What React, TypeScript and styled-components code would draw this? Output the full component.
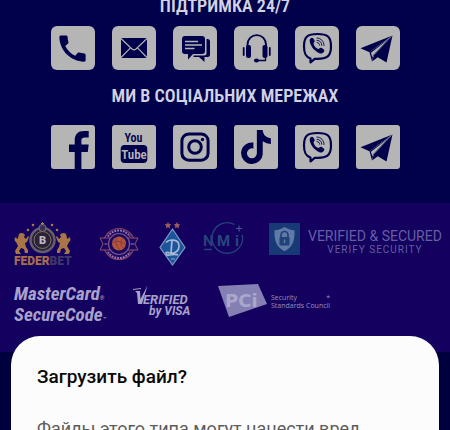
import React from "react";
import styled, { createGlobalStyle } from "styled-components";
import { MdCall } from "react-icons/md";
import { FaTiktok } from "react-icons/fa";

const navy = "#01014b";
const silver = "#b5b5b5";
const condensed = `"Roboto Condensed", "Liberation Sans Narrow", Roboto, sans-serif`;

const GlobalStyle = createGlobalStyle`
  body {
    margin: 0;
    overflow: hidden;
    background: #00003f;
    font-family: Roboto, sans-serif;
  }
`;

const Page = styled.div`
  position: relative;
  min-height: 100vh;
  overflow: hidden;
`;

const Contacts = styled.section`
  display: flex;
  flex-direction: column;
  align-items: center;
  margin-top: -4px;
  padding-bottom: 34px;
  background: ${navy};
`;

const Heading = styled.h2`
  margin: 0;
  font: 600 18px/20px ${condensed};
  color: #d2d2e2;
  text-align: center;
`;

const TileRow = styled.nav<{ $top: number; $bottom: number }>`
  display: flex;
  justify-content: center;
  gap: 17px;
  padding: ${(p) => p.$top}px 0 ${(p) => p.$bottom}px;
`;

const Tile = styled.a<{ $radius: number }>`
  display: grid;
  place-items: center;
  width: 44px;
  height: 44px;
  border-radius: ${(p) => p.$radius}px;
  background: ${silver};
  color: ${navy};
  overflow: hidden;
`;

const Partners = styled.footer`
  height: 149px;
  box-sizing: border-box;
  padding: 19px 12px 0 14px;
  background: #13005f;
`;

const LogoRow = styled.div<{ $columns: string }>`
  display: grid;
  grid-template-columns: ${(p) => p.$columns};
  align-items: start;

  & + & {
    margin-top: 18px;
  }
`;

const Logo = styled.svg`
  display: block;
  overflow: visible;
`;

const Secured = styled.div`
  display: flex;
  gap: 8px;
  padding-top: 1px;
`;

const SecuredText = styled.div`
  display: flex;
  flex-direction: column;
  align-items: center;
  padding-top: 4px;
  color: #655ea5;
  white-space: nowrap;
`;

const SecuredTitle = styled.span`
  font-size: 14px;
  line-height: 18px;
`;

const SecuredNote = styled.span`
  font-size: 10px;
  line-height: 10px;
  letter-spacing: 1px;
`;

const SecureCode = styled.div`
  font: italic 700 19px/17px ${condensed};
  color: #a9a2cb;
  padding-top: 1px;
`;

const Mark = styled.small`
  font-size: 6px;
`;

const Pci = styled.div`
  display: flex;
  gap: 4px;
`;

const PciText = styled.div`
  padding-top: 10px;
  font: 400 7px/8px "Open Sans", sans-serif;
  color: #9690bd;
  white-space: nowrap;
`;

const PciLine = styled.div`
  display: flex;
  justify-content: space-between;
`;

const Overlay = styled.div`
  position: absolute;
  inset: 0;
  padding: 336px 11px 0;
`;

const Dialog = styled.div`
  padding: 27px 26px 32px;
  border-radius: 29px;
  background: #fcfcfc;
`;

const DialogTitle = styled.h1`
  margin: 0 0 26px;
  font-size: 19px;
  line-height: 28px;
  font-weight: 500;
  color: #0a0a0a;
`;

const DialogText = styled.p`
  margin: 0;
  font-size: 18px;
  line-height: 24px;
  color: #5c5c5c;
`;

const Glyph = ({ children }: { children: React.ReactNode }) => (
  <svg width="44" height="44" viewBox="0 0 44 44" fill="currentColor" aria-hidden="true">
    {children}
  </svg>
);

const Envelope = () => (
  <Glyph>
    <rect x="9" y="12" width="26" height="20" rx="1" />
    <path d="M9 12.500 20 23q2 1.700 4 0L35 12.500M9 31.500 18.500 21.800M35 31.500 25.500 21.800" fill="none" stroke={silver} strokeWidth="1.100" />
  </Glyph>
);

const Chat = () => (
  <Glyph>
    <path d="M33.500 13h1a2.500 2.500 0 0 1 2.500 2.500v13a2.500 2.500 0 0 1-2.500 2.500H31.500v5L26 31H20.500V29.500H31a2.500 2.500 0 0 0 2.500-2.500z" />
    <path d="M12 10H29a3 3 0 0 1 3 3V25a3 3 0 0 1-3 3H20l-5 5.500V28H12a3 3 0 0 1-3-3V13a3 3 0 0 1 3-3z" />
    <path d="M12 15.500H25M12 19H29M12 22.500H21.500" stroke={silver} strokeWidth="1.300" />
  </Glyph>
);

const Headset = () => (
  <Glyph>
    <path d="M13.500 21V19C13.500 5.800 32 5.800 32 19V21" fill="none" stroke="currentColor" strokeWidth="1.800" />
    <rect x="12" y="19" width="5" height="13" rx="2" />
    <rect x="28.500" y="19" width="5" height="13" rx="2" />
    <rect x="8.800" y="21" width="1.800" height="9" rx=".9" />
    <rect x="34.900" y="21" width="1.800" height="9" rx=".9" />
    <path d="M31.500 31V34.500H22.500" fill="none" stroke="currentColor" strokeWidth="1.300" />
    <ellipse cx="22.500" cy="34.500" rx="2.500" ry="1.900" />
  </Glyph>
);

const Viber = () => (
  <Glyph>
    <path
      d="M22.500 8C12.500 8 9 10.500 9 20.500c0 7 1.500 10.500 6.500 12V36.500l4.200-3.700c12.300.7 16.300-2.200 16.300-12.300C36 10.500 32.500 8 22.500 8z"
      fill="none"
      stroke="currentColor"
      strokeWidth="2.200"
      strokeLinejoin="round"
    />
    <path d="M15.500 12.600c1.500-1.500 2.300-1.100 3.800 1.500 1.200 2-.6 2.400-.8 3.500.5 2.600 2.400 4.800 4.900 5.400 1.300-.2 1.500-2.100 3.700-.8 2.500 1.600 2.900 2.300 1.400 4-1.400 1.500-2.500 1.700-4.600.7-5-2.600-7.400-6-8.900-10.200-.5-1.700-.4-3.200.5-4.100z" />
    <path d="M22 12c4 .2 7 3.200 7 7.500M22 14.300c3 .2 4.800 2.100 4.800 5M22 16.500c1.700.2 2.600 1.100 2.700 2.700" fill="none" stroke="currentColor" strokeWidth=".9" strokeLinecap="round" />
  </Glyph>
);

const Plane = () => (
  <Glyph>
    <path d="M36.500 9.500 4.500 22.300 13.500 26.200z" />
    <path d="M13.500 26.200 16 35.500 17.500 29.500 34 12z" />
    <path d="M36.500 9.500 18 29.300 16 35.500 21.800 31.300 30.500 36.500z" />
    <path d="M15 26.800 33 12.800 17.300 29 16.300 31.500z" fill={silver} />
  </Glyph>
);

const Facebook = () => (
  <Glyph>
    <path d="M23.700 44V27H18V19.500h5.700V15.500C23.700 9.300 27 6 33 6h4.700v6.600H34.500c-3.200 0-4.100 1-4.100 3.700v3.200h7.300L36.800 27H30.400V44z" />
  </Glyph>
);

const YouTube = () => (
  <Glyph>
    <text x="21.500" y="17" textAnchor="middle" fontFamily={condensed} fontWeight="600" fontSize="12">You</text>
    <rect x="8.700" y="20" width="26.600" height="18" rx="4" />
    <text x="22" y="34" textAnchor="middle" fontFamily={condensed} fontWeight="600" fontSize="13" fill={silver}>Tube</text>
  </Glyph>
);

const Instagram = () => (
  <Glyph>
    <g fill="none" stroke="currentColor" strokeWidth="3">
      <rect x="8.900" y="9" width="26.200" height="26.200" rx="7" />
      <circle cx="22" cy="22" r="6.300" />
    </g>
    <circle cx="29.500" cy="14.500" r="1.700" />
  </Glyph>
);

const Lion = () => (
  <path d="M5 12c2-2 5-1 6 1l-1 2 2 2 2-3 1 1-2 5-2 1 1 4 2 3v3h-3l-1-4-3-1-2 3 2 3H2l-1-3 3-5-2-4C0 19 0 16 2 15l1 2 1-1z" fill="#a87546" />
);

const FederBet = () => (
  <Logo width="57" height="44" viewBox="0 0 57 44" role="img" aria-label="Federbet">
    <Lion />
    <g transform="translate(57 0) scale(-1 1)"><Lion /></g>
    <circle cx="28.500" cy="18" r="12" fill="#222142" stroke="#675d6c" strokeWidth="2.500" />
    <circle cx="28.500" cy="18" r="8.500" fill="#292239" stroke="#8f7254" strokeWidth="1" />
    <circle cx="28.500" cy="6" r="3.500" fill="#373158" stroke="#847263" />
    <path d="M28.500 0v3M27 1.500h3" stroke="#a88353" />
    <g fill="#a87943">
      <circle cx="14" cy="8" r="1.300" /><circle cx="19" cy="3" r="1.300" />
      <circle cx="38" cy="3" r="1.300" /><circle cx="43" cy="8" r="1.300" />
    </g>
    <text x="28.500" y="22" textAnchor="middle" fontFamily="Roboto, sans-serif" fontSize="11" fontWeight="900" fill="#bfb8c4">B</text>
    <text x="0" y="43" fontFamily="Roboto, sans-serif" fontSize="12" fontWeight="900" fill="#a66d4e">FEDER<tspan fill="#40386a">BET</tspan></text>
  </Logo>
);

const Basketball = () => (
  <Logo width="40" height="44" viewBox="0 0 40 44" role="img" aria-label="Basketball federation">
    <circle cx="20" cy="22" r="15.500" fill="#210863" stroke="#8e3f65" strokeWidth="1.200" />
    <path d="M1 16h38l-3 6 3 6H1l3-6z" fill="#190661" stroke="#8e506e" />
    <circle cx="20" cy="22" r="10.500" fill="#190661" stroke="#77568f" strokeWidth="1.200" />
    <path d="M5.500 22h3M31.500 22h4" stroke="#645493" strokeWidth="1.500" />
    <path d="M9 14.500a13 13 0 0 1 22 0M9 30a13 13 0 0 0 22 0" fill="none" stroke="#8c7cae" strokeWidth="2" strokeDasharray="1.800 1" />
    <circle cx="20" cy="21.500" r="7" fill="#b35436" />
    <path d="M13 21c5-3 9-2 14 2M18 15c-2 5-1 9 3 13M24 16c-3 3-3 8 1 11" fill="none" stroke="#713050" strokeWidth=".7" />
  </Logo>
);

const Dynamo = () => (
  <Logo width="28" height="44" viewBox="0 0 28 44" role="img" aria-label="Dynamo">
    <path d="m9 0 1 2 2.300.3-1.600 1.700.4 2.300L9 5.300 6.900 6.300l.4-2.300L5.700 2.300 8 2z M18 0l1 2 2.300.3-1.600 1.700.4 2.300L18 5.300l-2.100 1 .4-2.300-1.600-1.700L17 2z" fill="#9c5a5a" />
    <path d="M13.500 7 26 25.500 13.500 43 1 25.500z" fill="#1c559b" stroke="#7f9ac3" strokeWidth="1.200" />
    <path d="M7 20.500c3-3.500 13-4 13 3.500 0 6-6 8.500-11 6.500M13 18l-1 13M10 31c-3-2-4 1-2 2 3 1 7-2 11 0" fill="none" stroke="#a9b8d6" strokeWidth="1.700" />
    <path d="M12 37h4" stroke="#91a8cc" />
  </Logo>
);

const Nmi = () => (
  <Logo width="42" height="44" viewBox="0 0 42 44" role="img" aria-label="NMi" fontFamily="Roboto, sans-serif" fontSize="15" fontWeight="700">
    <path d="M31.500 2.500A15.300 15.300 0 1 0 39.300 13" fill="none" stroke="#24437c" strokeWidth="1.400" />
    <path d="M33 6.500h6M36 3.500v6" stroke="#3a5888" strokeWidth="1.200" />
    <text x="0" y="24" fill="#26407b">N</text>
    <text x="14" y="24" fill="#26477b">M</text>
    <text x="32" y="24" fill="#26477b">i</text>
    <path d="M1 27.500h8" stroke="#26407b" strokeWidth="1.500" />
  </Logo>
);

const Shield = () => (
  <Logo width="31" height="32" viewBox="0 0 31 32" aria-hidden="true">
    <path d="M0 0h31v32H0z" fill="#173a76" />
    <path d="M15.500 4c3 2 6 3.200 10 3.200.5 9-1.500 17-10 21-8.500-4-10.500-12-10-21C9.500 7.200 12.500 6 15.500 4z" fill="#6179a5" />
    <path d="M12 15v-3a3.500 3.500 0 0 1 7 0v3" fill="none" stroke="#204179" strokeWidth="1.700" />
    <rect x="10.500" y="14" width="10" height="8.500" rx="1" fill="#204179" />
    <path d="M15.500 16.500v3.500" stroke="#6179a5" strokeWidth="1.500" />
  </Logo>
);

const Visa = () => (
  <Logo width="60" height="34" viewBox="0 0 60 34" role="img" aria-label="Verified by Visa" fill="#a8a1ca">
    <path d="M2 7h5l.5 8L14.500 1.500 9 20H5L4 9z" />
    <path d="M0 5.500 8 4.500" stroke="#a8a1ca" />
    <text x="10" y="20" fontFamily="Roboto, sans-serif" fontStyle="italic" fontWeight="700" fontSize="13">ERIFIED</text>
    <text x="16" y="31" fontFamily="Roboto, sans-serif" fontStyle="italic" fontWeight="700" fontSize="12">by VISA</text>
  </Logo>
);

const PciBadge = () => (
  <Logo width="49" height="33" viewBox="0 0 49 33" role="img" aria-label="PCI">
    <path d="M0 2 40 0 49 20 11 33z" fill="#8580b3" />
    <text x="7" y="23" fontFamily="'DejaVu Sans', sans-serif" fontWeight="700" fontSize="18" fill="#aaa7ca">PCi</text>
  </Logo>
);

const support = [
  { label: "Телефон", icon: <MdCall size={35} /> },
  { label: "Пошта", icon: <Envelope /> },
  { label: "Чат", icon: <Chat /> },
  { label: "Оператор", icon: <Headset /> },
  { label: "Viber", icon: <Viber /> },
  { label: "Telegram", icon: <Plane /> },
];

const social = [
  { label: "Facebook", icon: <Facebook /> },
  { label: "YouTube", icon: <YouTube /> },
  { label: "Instagram", icon: <Instagram /> },
  { label: "TikTok", icon: <FaTiktok size={34} /> },
  { label: "Viber", icon: <Viber /> },
  { label: "Telegram", icon: <Plane /> },
];

export default function App() {
  return (
    <Page>
      <GlobalStyle />
      <Contacts>
        <Heading>ПІДТРИМКА 24/7</Heading>
        <TileRow $top={10} $bottom={16}>
          {support.map((item) => (
            <Tile key={item.label} href="#" aria-label={item.label} $radius={6}>{item.icon}</Tile>
          ))}
        </TileRow>
        <Heading>МИ В СОЦІАЛЬНИХ МЕРЕЖАХ</Heading>
        <TileRow $top={19} $bottom={0}>
          {social.map((item) => (
            <Tile key={item.label} href="#" aria-label={item.label} $radius={3}>{item.icon}</Tile>
          ))}
        </TileRow>
      </Contacts>
      <Partners>
        <LogoRow $columns="85px 60px 44px 66px 1fr">
          <FederBet />
          <Basketball />
          <Dynamo />
          <Nmi />
          <Secured>
            <Shield />
            <SecuredText>
              <SecuredTitle>VERIFIED &amp; SECURED</SecuredTitle>
              <SecuredNote>VERIFY SECURITY</SecuredNote>
            </SecuredText>
          </Secured>
        </LogoRow>
        <LogoRow $columns="119px 85px 1fr">
          <SecureCode>
            MasterCard<Mark>®</Mark>
            <br />
            SecureCode<Mark>™</Mark>
          </SecureCode>
          <Visa />
          <Pci>
            <PciBadge />
            <PciText>
              <PciLine><span>Security</span><span>*</span></PciLine>
              <div>Standards Council</div>
            </PciText>
          </Pci>
        </LogoRow>
      </Partners>
      <Overlay>
        <Dialog role="dialog" aria-labelledby="dialog-title">
          <DialogTitle id="dialog-title">Загрузить файл?</DialogTitle>
          <DialogText>Файлы этого типа могут нанести вред</DialogText>
        </Dialog>
      </Overlay>
    </Page>
  );
}
